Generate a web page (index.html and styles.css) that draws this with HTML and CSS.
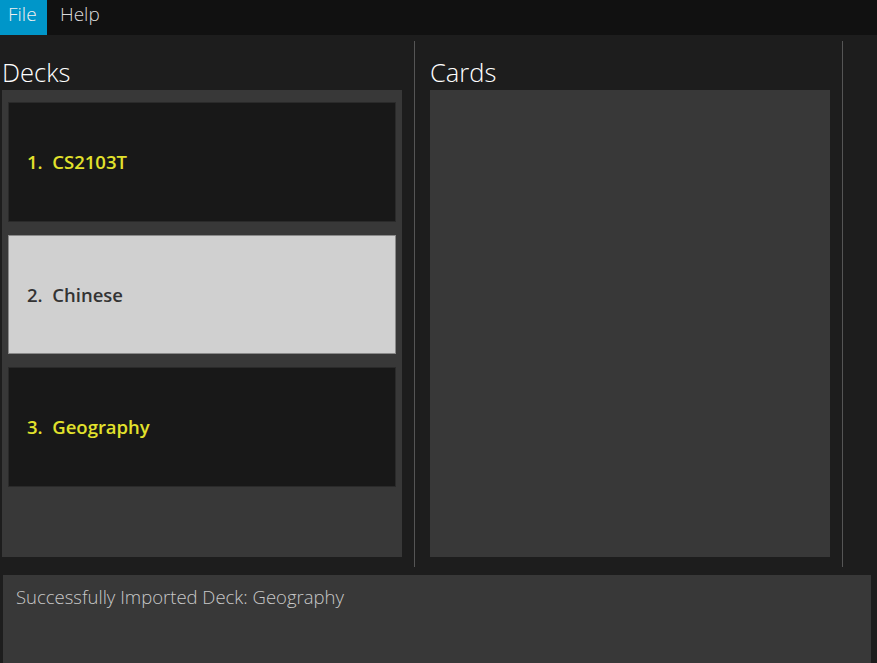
FILE: index.html
```
<!DOCTYPE html>
<html>
<head>
<meta charset="utf-8">
<link rel="stylesheet" href="styles.css">
</head>
<body>
<div class="menubar">
  <div class="menu-item active">File</div>
  <div class="menu-item">Help</div>
</div>
<div class="main">
  <div class="column">
    <div class="title">Decks</div>
    <div class="panel deck-list">
      <div class="deck">1.&nbsp;&nbsp;CS2103T</div>
      <div class="deck selected">2.&nbsp;&nbsp;Chinese</div>
      <div class="deck">3.&nbsp;&nbsp;Geography</div>
    </div>
  </div>
  <div class="sep sep-left"></div>
  <div class="column">
    <div class="title">Cards</div>
    <div class="panel"></div>
  </div>
  <div class="sep sep-right"></div>
</div>
<div class="status">Successfully Imported Deck: Geography</div>
</body>
</html>
```
FILE: styles.css
```
html, body {
  margin: 0;
  padding: 0;
}
body {
  width: 877px;
  height: 663px;
  overflow: hidden;
  background: #1d1d1d;
  font-family: "Open Sans", "Noto Sans", sans-serif;
}
.menubar {
  height: 35px;
  background: #111111;
  display: flex;
}
.menu-item {
  height: 35px;
  line-height: 29px;
  padding: 0 0 0 13px;
  font-size: 19px;
  font-weight: 300;
  color: #dcdcdc;
  box-sizing: border-box;
}
.menu-item.active {
  background: #0096c9;
  color: #f0f0f0;
  width: 47px;
  padding-left: 8px;
}
.main {
  display: flex;
  height: 540px;
  padding-top: 6px;
  box-sizing: border-box;
}
.column {
  width: 400px;
  display: flex;
  flex-direction: column;
}
.column:first-child {
  margin-left: 2px;
}
.title {
  height: 49px;
  box-sizing: border-box;
  padding-left: 0;
  font-size: 25.5px;
  font-weight: 300;
  color: #ffffff;
  display: flex;
  align-items: flex-end;
  line-height: 32px;
  padding-bottom: 2px;
}
.panel {
  height: 467px;
  background: #383838;
}
.deck-list {
  padding: 12px 6px 0 6px;
  box-sizing: border-box;
  display: flex;
  flex-direction: column;
  gap: 13px;
}
.deck {
  height: 120px;
  box-sizing: border-box;
  background: #181818;
  border: 1px solid #2a2a2a;
  padding-left: 18px;
  display: flex;
  align-items: center;
  font-size: 18.5px;
  font-weight: 600;
  color: #e2e22c;
  padding-bottom: 1px;
}
.deck.selected {
  height: 119px;
  background: #d0d0d0;
  border-color: #8a8a8a;
  color: #333333;
}
.sep {
  width: 1px;
  height: 526px;
  background: #555555;
}
.sep-left {
  margin-left: 12px;
  margin-right: 15px;
}
.sep-right {
  margin-left: 12px;
}
.status {
  margin: 0 0 0 3px;
  width: 868px;
  height: 88px;
  background: #383838;
  box-sizing: border-box;
  padding: 9px 0 0 13px;
  font-size: 18.5px;
  font-weight: 300;
  color: #c8c8c8;
}
```
